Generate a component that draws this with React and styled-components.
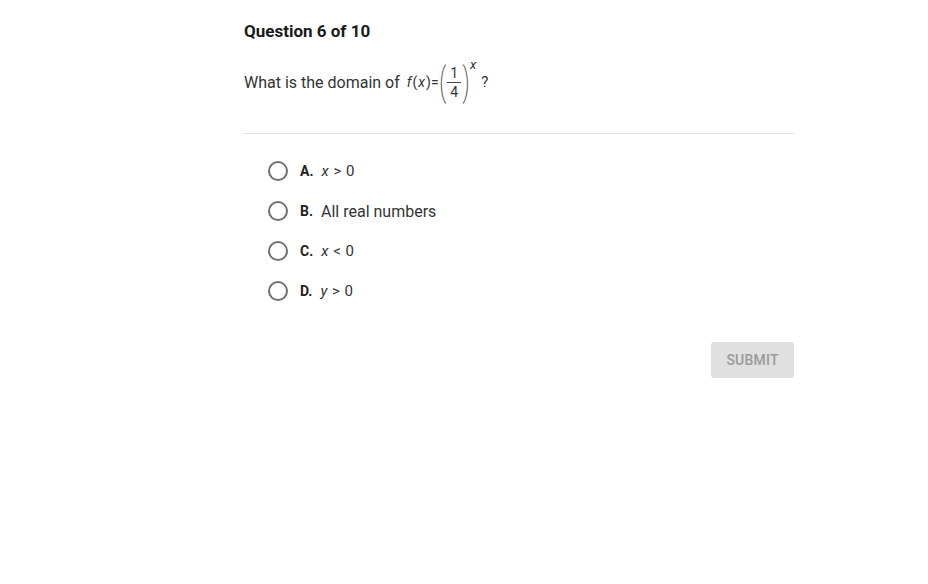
import React from "react";
import styled, { createGlobalStyle } from "styled-components";

const GlobalStyle = createGlobalStyle`
  body {
    margin: 0;
    background: #fff;
    font-family: Roboto, "Liberation Sans", sans-serif;
    color: #222;
  }
`;

const Page = styled.div`
  width: 928px;
  height: 584px;
  padding: 21px 0 0 244px;
  box-sizing: border-box;
`;

const Column = styled.div`
  width: 550px;
  display: flex;
  flex-direction: column;
`;

const Title = styled.h2`
  margin: 0;
  font-size: 17px;
  line-height: 21px;
  font-weight: 700;
  color: #1a1a1a;
`;

const Prompt = styled.div`
  display: flex;
  align-items: center;
  margin-top: 18px;
  height: 44px;
  font-size: 16px;
  color: #333;
`;

const MathWrap = styled.span`
  display: inline-flex;
  align-items: center;
  margin-left: 7px;
  font-size: 14px;
  color: #333;
`;

const Ital = styled.i`
  font-style: italic;
`;

const Gap = styled.span`
  display: inline-block;
  width: ${(p) => p.$w}px;
`;

const Paren = styled.span`
  font-size: 38px;
  font-weight: 200;
  line-height: 38px;
  transform: scaleX(0.6);
  color: #444;
  display: inline-block;
  margin: 0 -2px;
`;

const Fraction = styled.span`
  display: inline-flex;
  flex-direction: column;
  align-items: center;
  font-size: 14px;
  line-height: 16px;
  margin: 0 1px;
`;

const Num = styled.span`
  padding: 0 3px 1px;
  border-bottom: 1px solid #444;
`;

const Den = styled.span`
  padding: 1px 3px 0;
`;

const Sup = styled.span`
  align-self: flex-start;
  font-style: italic;
  font-size: 13px;
  margin-top: -6px;
`;

const Qmark = styled.span`
  margin-left: 5px;
  font-size: 15px;
`;

const Divider = styled.hr`
  margin: 29px 0 0 -1px;
  border: none;
  border-top: 1px solid #e4e4e4;
  width: 551px;
`;

const Options = styled.div`
  display: flex;
  flex-direction: column;
  gap: 18px;
  margin-top: 26px;
  padding-left: 24px;
`;

const Option = styled.label`
  display: flex;
  align-items: center;
  height: 22px;
  font-size: 16px;
  color: #333;
  cursor: pointer;
`;

const Radio = styled.span`
  width: 16px;
  height: 16px;
  border: 2px solid #6f6f6f;
  border-radius: 50%;
  margin-right: 12px;
  flex-shrink: 0;
`;

const Letter = styled.span`
  font-weight: 700;
  font-size: 14px;
  color: #222;
  margin-right: 8px;
`;

const Answer = styled.span`
  font-size: ${(p) => (p.$math ? "15px" : "16px")};
  word-spacing: ${(p) => (p.$math ? "1px" : "0")};
`;

const Footer = styled.div`
  display: flex;
  justify-content: flex-end;
  margin-top: 40px;
`;

const Submit = styled.button`
  width: 83px;
  height: 36px;
  border: none;
  border-radius: 3px;
  background: #e0e0e0;
  color: #9a9a9a;
  font-family: Roboto, "Liberation Sans", sans-serif;
  font-size: 14px;
  font-weight: 500;
  letter-spacing: 0.2px;
`;

const options = [
  { letter: "A.", math: true, content: <><Ital>x</Ital> &gt; 0</> },
  { letter: "B.", math: false, content: "All real numbers" },
  { letter: "C.", math: true, content: <><Ital>x</Ital> &lt; 0</> },
  { letter: "D.", math: true, content: <><Ital>y</Ital> &gt; 0</> },
];

export default function App() {
  return (
    <Page>
      <GlobalStyle />
      <Column>
        <Title>Question 6 of 10</Title>
        <Prompt>
          What is the domain of
          <MathWrap>
            <Ital>f</Ital>
            <Gap $w={1} />(<Gap $w={1} />
            <Ital>x</Ital>
            <Gap $w={1} />)=
            <Paren>(</Paren>
            <Fraction>
              <Num>1</Num>
              <Den>4</Den>
            </Fraction>
            <Paren>)</Paren>
            <Sup>x</Sup>
            <Qmark>?</Qmark>
          </MathWrap>
        </Prompt>
        <Divider />
        <Options>
          {options.map((o) => (
            <Option key={o.letter}>
              <Radio />
              <Letter>{o.letter}</Letter>
              <Answer $math={o.math}>{o.content}</Answer>
            </Option>
          ))}
        </Options>
        <Footer>
          <Submit disabled>SUBMIT</Submit>
        </Footer>
      </Column>
    </Page>
  );
}
